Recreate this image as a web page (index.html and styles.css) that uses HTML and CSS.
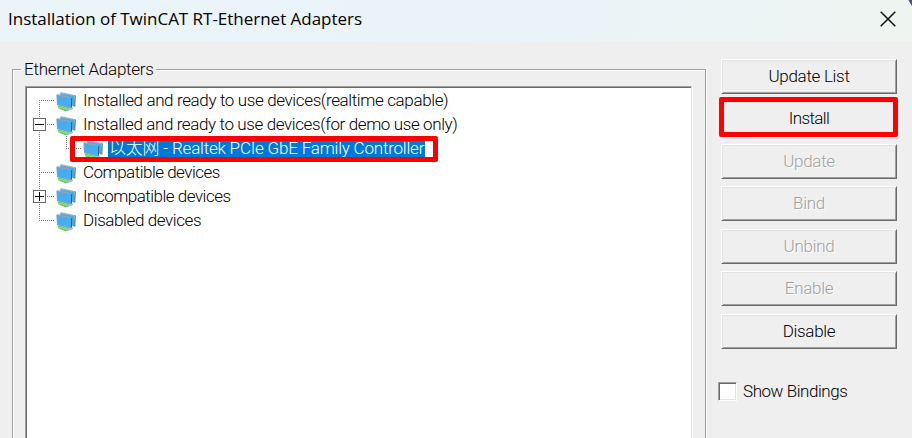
FILE: index.html
```html
<!DOCTYPE html>
<html lang="en">
<head>
<meta charset="utf-8">
<title>Installation of TwinCAT RT-Ethernet Adapters</title>
<link rel="stylesheet" href="styles.css">
</head>
<body>
<svg class="defs" width="0" height="0" aria-hidden="true">
  <defs>
    <linearGradient id="screen" x1="0" y1="0" x2="1" y2="1">
      <stop offset="0" stop-color="#4aa6ea"/><stop offset="1" stop-color="#3fb4f8"/>
    </linearGradient>
    <symbol id="nic" viewBox="0 0 22 20">
      <path d="M4 .5 6 .3 20 3.200V5L4 3z" fill="#a9b8c0"/>
      <path d="M5 1.500 18.500 4V14.200L5 11z" fill="url(#screen)"/>
      <path d="M18.900 3.500 20 3.800 19.300 14.800 17 14.300" fill="#6d8fa3"/>
      <path d="M.3 2.800 2 2.300 16 5.200 15.600 17 1 13.300z" fill="#8fa5b1"/>
      <path d="M1.300 3.700 14.800 6.200V15.800L1.800 12.300z" fill="url(#screen)"/>
      <path d="M15.700 5.800 15.400 16.500" stroke="#2f5f7c" stroke-width="1"/>
      <path d="M1.500 13.800 4 14 13 16.400 12 18.500 9.500 19.300 2.500 16.300z" fill="#56c95a"/>
      <path d="M2 14.200 12 17 11 18 2.800 15.500z" fill="#8ee48c"/>
      <path d="M12 16.600 17 15.300 16.500 17.500 11.500 19.200z" fill="#b3bdc2"/>
    </symbol>
  </defs>
</svg>
<div class="window">
  <header class="titlebar">
    <h1 class="title">Installation of TwinCAT RT-Ethernet Adapters</h1>
    <svg class="close" width="16" height="16" viewBox="0 0 16 16"><path d="M.7.700 15.300 15.300M15.300.700.7 15.300"/></svg>
  </header>
  <main class="content">
    <section class="group">
      <h2 class="legend"><span class="t-legend">Ethernet Adapters</span></h2>
      <div class="tree">
        <div class="row"><span class="rail first"></span><svg class="nic"><use href="#nic"/></svg><span class="label t-real">Installed and ready to use devices(realtime capable)</span></div>
        <div class="row"><span class="rail"><i class="toggle"></i></span><svg class="nic"><use href="#nic"/></svg><span class="label t-demo">Installed and ready to use devices(for demo use only)</span></div>
        <div class="row"><span class="rail through"></span><span class="rail child"></span><svg class="nic"><use href="#nic"/></svg><span class="label selected"><span class="t-sel">以太网 - Realtek PCIe GbE Family Controller</span></span><span class="mark mark-row"></span></div>
        <div class="row"><span class="rail"></span><svg class="nic"><use href="#nic"/></svg><span class="label t-comp">Compatible devices</span></div>
        <div class="row"><span class="rail"><i class="toggle plus"></i></span><svg class="nic"><use href="#nic"/></svg><span class="label t-comp">Incompatible devices</span></div>
        <div class="row"><span class="rail last"></span><svg class="nic"><use href="#nic"/></svg><span class="label t-dis">Disabled devices</span></div>
      </div>
    </section>
    <aside class="actions">
      <button class="btn"><span class="t-list">Update List</span></button>
      <button class="btn"><span class="t-install">Install</span><span class="mark mark-btn"></span></button>
      <button class="btn off" disabled>Update</button>
      <button class="btn off" disabled>Bind</button>
      <button class="btn off" disabled>Unbind</button>
      <button class="btn off" disabled>Enable</button>
      <button class="btn">Disable</button>
      <label class="check"><span class="box"></span><span class="t-show">Show Bindings</span></label>
    </aside>
  </main>
  <span class="corner"></span>
</div>
</body>
</html>
```
FILE: styles.css
```css
* { box-sizing: border-box; }
body { margin: 0; overflow: hidden; background: #efefef; }
.defs { position: absolute; }
.window {
  position: relative;
  width: 912px; height: 438px; overflow: hidden;
  display: flex; flex-direction: column;
  background: #efefef; color: #000;
  font: 300 17px/24px Roboto, "Noto Sans CJK SC", sans-serif;
}
.corner {
  position: absolute; right: 0; top: 0; width: 4px; height: 7px;
  background: linear-gradient(60deg, transparent 50%, #4a5570 60%);
}
.titlebar {
  flex: none; height: 41px; padding: 0 16px 4px 8px;
  display: flex; align-items: center; justify-content: space-between;
  background: linear-gradient(100deg, #ebf4f8, #eaf3fa 55%, #eef4f0);
}
.title { margin: 0; font: 400 17px/24px "Open Sans", sans-serif; letter-spacing: -.02px; white-space: nowrap; }
.close { fill: none; stroke: #111; stroke-width: 1.500; }
.content { flex: 1; display: flex; padding-left: 12px; }
.group {
  flex: none; width: 694px; height: 420px; margin-top: 28px; padding: 0 13px 0 12px;
  border: 1px solid #a0a0a0; box-shadow: inset 1px 1px #fff, 1px 0 #fff;
}
.legend {
  width: max-content; height: 16px; margin: -9px 0 9px -4px; padding: 0 2px 0 3px;
  background: #efefef; font: inherit; line-height: 16px; white-space: nowrap;
}
.tree {
  height: 400px; background: #fff; border: 1px solid #a0a0a0; border-right-color: #e3e3e3;
  box-shadow: inset 1px 1px #696969, 1px 0 #fff; padding: 1px 0 0 13px;
}
.row { position: relative; display: flex; align-items: center; height: 24px; white-space: nowrap; }
.rail {
  flex: none; position: relative; width: 16px; height: 24px;
  background:
    repeating-linear-gradient(90deg, #808080 0 1px, transparent 1px 2px) 0 12px / 100% 1px no-repeat,
    repeating-linear-gradient(#808080 0 1px, transparent 1px 2px) 0 0 / 1px 100% no-repeat;
}
.rail.first { background-position: 0 12px, 0 12px; }
.rail.last, .rail.child { background-size: 100% 1px, 1px 12px; }
.rail.through { width: 27px; background-size: 0 0, 1px 100%; }
.toggle {
  position: absolute; left: -6px; top: 6px; width: 13px; height: 13px;
  border: 1px solid #696969; background: linear-gradient(#000, #000) 1px 5px / 9px 1px no-repeat #fff;
}
.toggle.plus {
  background: linear-gradient(#000, #000) 1px 5px / 9px 1px no-repeat,
    linear-gradient(#000, #000) 5px 1px / 1px 9px no-repeat #fff;
}
.nic { flex: none; width: 22px; height: 20px; margin: 3px 5px 0 1px; }
.label { height: 24px; }
.selected { background: #0078d7; color: #fff; margin-left: -2px; padding-left: 1px; width: 317px; }
.t-legend { letter-spacing: -.25px; }
.t-real { letter-spacing: -.37px; }
.t-demo { letter-spacing: -.39px; }
.t-sel { letter-spacing: -.2px; }
.t-comp { letter-spacing: -.5px; }
.t-dis { letter-spacing: -.4px; }
.t-list { letter-spacing: -.3px; }
.t-install { letter-spacing: -.6px; }
.t-show { letter-spacing: -.45px; }
.mark { position: absolute; border: 5px solid #f00; border-radius: 2px; }
.mark-row { left: 31px; top: 0; width: 368px; height: 26px; }
.actions { display: flex; flex-direction: column; margin: 18px 0 0 15px; width: 176px; }
.btn {
  position: relative; flex: none; height: 35px; margin: 0 0 7.450px; padding: 0 0 1px;
  border: 1px solid; border-color: #fff #696969 #696969 #fff; border-radius: 0;
  background: #efefef; box-shadow: inset 1px 1px #e3e3e3, inset -1px -1px #a0a0a0;
  font: inherit; letter-spacing: -.3px; color: #000;
}
.btn.off { color: #a0a0a0; text-shadow: 1px 1px #fff; }
.mark-btn { left: -3px; top: -5px; width: 179px; height: 40px; }
.check { display: flex; align-items: center; gap: 6px; margin: 23px 0 0 -3px; white-space: nowrap; }
.box {
  width: 19px; height: 19px; background: #fff; border: 1px solid;
  border-color: #a0a0a0 #fff #fff #a0a0a0; box-shadow: inset 1px 1px #696969, inset -1px -1px #e3e3e3;
}
```
